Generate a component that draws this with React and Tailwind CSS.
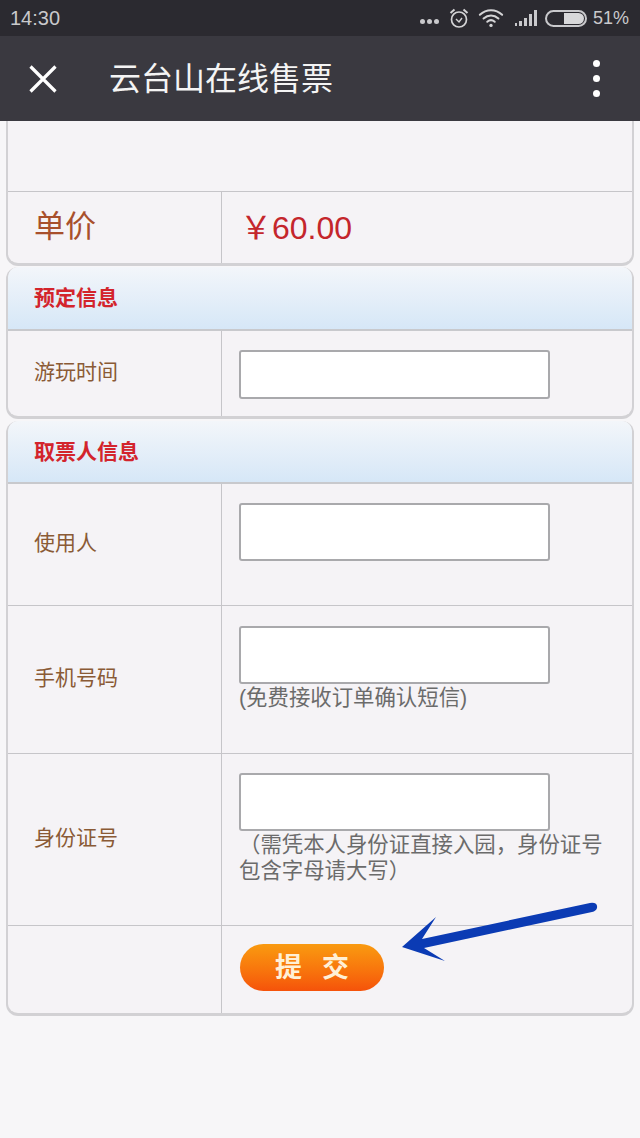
import React from "react";

const cjk = { fontFamily: '"Liberation Sans", "Noto Sans CJK SC", sans-serif' };

const StatusIcons = () => (
  <div className="flex items-center">
    <div className="flex gap-[2px] mt-[7px] mr-[9px]">
      <span className="w-[5px] h-[5px] rounded-full bg-[#c9c9cc]" />
      <span className="w-[5px] h-[5px] rounded-full bg-[#c9c9cc]" />
      <span className="w-[5px] h-[5px] rounded-full bg-[#c9c9cc]" />
    </div>
    <svg width="22" height="24" viewBox="0 0 22 24" fill="none" stroke="#d4d4d6" strokeWidth="1.7" className="mr-[8px]">
      <circle cx="11" cy="13.5" r="7.5" />
      <path d="M8 13l3 3 3-4" strokeWidth="1.4" />
      <path d="M2.5 7l4-3.5M19.5 7l-4-3.5" strokeWidth="2" />
    </svg>
    <svg width="26" height="22" viewBox="0 0 28 22" fill="none" stroke="#d4d4d6" strokeWidth="2.2" strokeLinecap="round" className="mr-[10px]">
      <path d="M2 7.5c7-6.5 17-6.5 24 0" />
      <path d="M6 11.5c4.800-4.300 11.200-4.300 16 0" />
      <path d="M10 15c2.500-2.200 5.500-2.200 8 0" />
      <circle cx="14" cy="19" r="1.800" fill="#d4d4d6" stroke="none" />
    </svg>
    <svg width="24" height="20" viewBox="0 0 24 20" fill="#c9c9cc" className="mr-[7px]">
      <path d="M1 15h2v3H1z" />
      <path d="M5 13h3v5H5z" />
      <path d="M10 10h3v8h-3z" />
      <path d="M15 6h3v12h-3z" />
      <path d="M20 2h3v16h-3z" />
    </svg>
    <div className="flex justify-end w-[42px] h-[17px] rounded-full border-2 border-[#c9c9cc] p-[1px] mr-[6px]">
      <div className="w-[20px] h-full rounded-r-full rounded-l-[2px] bg-[#d8d8da]" />
    </div>
    <span className="text-[18px] leading-none text-[#c9c9cc]">51%</span>
  </div>
);

const Row = ({ label, height, labelClass = "text-[21px] text-[#8a5a35] pb-[3px]", children, last }) => (
  <div className={`flex ${last ? "" : "border-b border-[#c6c5c9]"}`} style={{ height }}>
    <div className={`w-[214px] shrink-0 flex items-center pl-[26px] border-r border-[#c6c5c9] ${labelClass}`}>
      {label}
    </div>
    <div className="flex-1 pl-[17px] min-w-0">{children}</div>
  </div>
);

const Header = ({ title, height }) => (
  <div
    className="flex items-center pl-[26px] rounded-t-[10px] border-b-2 border-[#c8c9cd] bg-gradient-to-b from-[#f3f6fa] to-[#d6e7f7] text-[21px] font-bold text-[#d3242c]"
    style={{ height }}
  >
    {title}
  </div>
);

const Box = ({ height, className = "" }) => (
  <div className={`w-[311px] bg-white border-2 border-[#a9a9ac] rounded-[3px] ${className}`} style={{ height }} />
);

const Card = ({ className = "", children }) => (
  <div className={`mx-[6px] border-x-2 border-b-[3px] border-[#d2d1d4] rounded-b-[12px] bg-[#f5f3f6] ${className}`}>
    {children}
  </div>
);

const App = () => {
  return (
    <div className="w-[640px] h-[1138px] overflow-hidden bg-[#f7f6f8]" style={cjk}>
      <div className="h-[36px] bg-[#2b2a30] flex items-center justify-between pl-[10px] pr-[11px]">
        <span className="text-[20px] leading-none text-[#c9c9cc]">14:30</span>
        <StatusIcons />
      </div>

      <div className="h-[85px] bg-[#3a3940] flex items-center pl-[29px] pr-[40px]">
        <svg width="28" height="28" viewBox="0 0 28 28" stroke="#ffffff" strokeWidth="3.2" className="mr-[52px]">
          <path d="M1.5 1.5l25 25M26.5 1.5l-25 25" />
        </svg>
        <span className="text-[32px] leading-none text-[#f4f4f4] flex-1">云台山在线售票</span>
        <div className="flex flex-col gap-[8px]">
          <span className="w-[7px] h-[7px] rounded-full bg-white" />
          <span className="w-[7px] h-[7px] rounded-full bg-white" />
          <span className="w-[7px] h-[7px] rounded-full bg-white" />
        </div>
      </div>

      <Card>
        <div className="h-[71px] border-b border-[#c6c5c9]" />
        <Row label="单价" height={71} labelClass="text-[31px] text-[#a8502c]" last>
          <div className="h-full flex items-center pl-[1px] text-[32px] text-[#c4262c]">
            <span>￥60.00</span>
          </div>
        </Row>
      </Card>

      <Card className="rounded-t-[12px] mt-[1px]">
        <Header title="预定信息" height={64} />
        <Row label="游玩时间" height={85} last>
          <Box height={49} className="mt-[19px]" />
        </Row>
      </Card>

      <Card className="rounded-t-[12px] mt-[2px]">
        <Header title="取票人信息" height={63} />
        <Row label="使用人" height={122}>
          <Box height={58} className="mt-[19px]" />
        </Row>
        <Row label="手机号码" height={148}>
          <Box height={58} className="mt-[20px]" />
          <p className="text-[21.4px] leading-[26px] text-[#6b6b6b] mt-[1px]">(免费接收订单确认短信)</p>
        </Row>
        <Row label="身份证号" height={172}>
          <Box height={58} className="mt-[19px]" />
          <p className="w-[372px] text-[21.4px] leading-[26px] text-[#6b6b6b] mt-[1px]">
            （需凭本人身份证直接入园，身份证号包含字母请大写）
          </p>
        </Row>
        <Row label="" height={87} last>
          <button
            className="block mt-[18px] ml-[1px] w-[144px] h-[47px] rounded-full bg-gradient-to-b from-[#f99a10] to-[#f5520a] text-[27px] font-bold leading-none text-[#fff0d6] tracking-[20px] pl-[20px] pb-[5px]"
            style={{ fontFamily: '"Noto Sans CJK SC", serif' }}
          >
            提交
          </button>
        </Row>
      </Card>

      {/* blue annotation arrow drawn over the form */}
      <svg width="200" height="62" viewBox="0 0 200 62" className="absolute left-[400px] top-[902px]">
        <path d="M2 45L36 15 22 37 190 1Q198 0 197 6 196 9 192 10L24 46 45 59Z" fill="#0b3bb4" />
      </svg>
    </div>
  );
};

export default App;
